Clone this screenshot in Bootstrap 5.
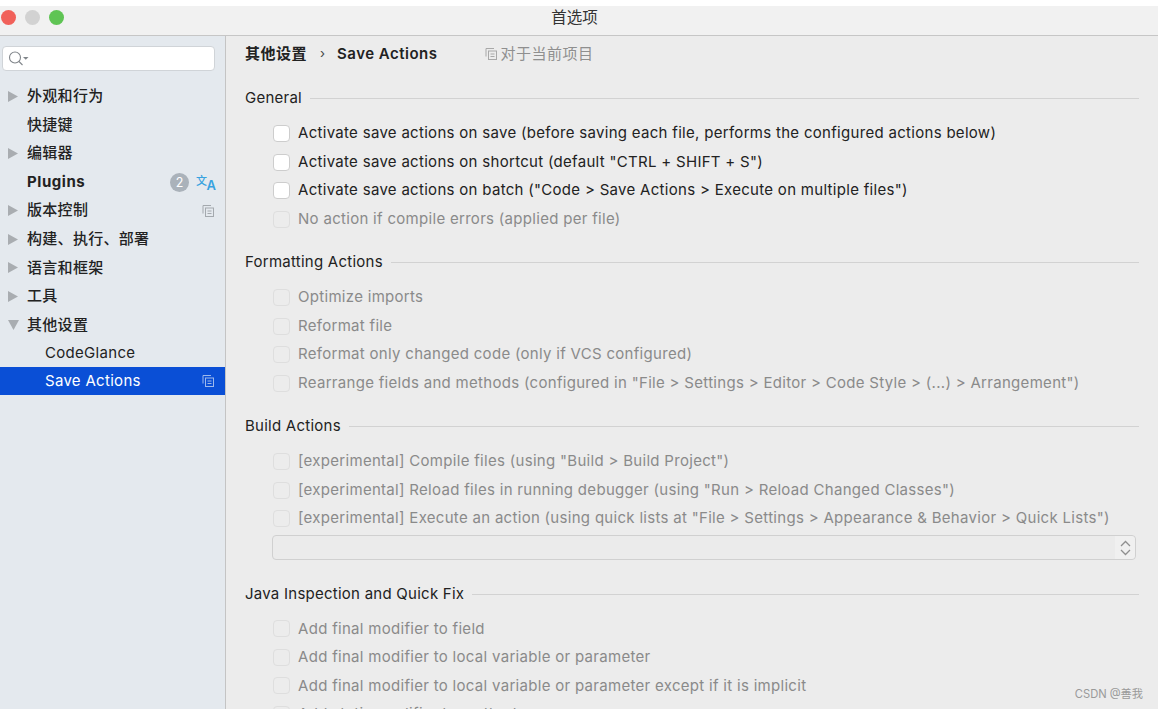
<!DOCTYPE html>
<html lang="zh-CN">
<head>
    <meta charset="UTF-8">
    <meta name="viewport" content="width=device-width, initial-scale=1">
    <title>首选项</title>
    <link rel="stylesheet" href="https://cdn.jsdelivr.net/npm/bootstrap@5.3.0/dist/css/bootstrap.min.css">
    <style>
        html, body { height: 709px; overflow: hidden; }
        body { background: #fff; font-family: Inter, "Noto Sans CJK SC", sans-serif; font-size: 15px; color: #222; padding-top: 6px; }
        .title-bar { height: 30px; background: #f1f1f1; border-bottom: 1px solid #c6c6c6; position: relative; padding-right: 9px; }
        .title-text { font-size: 15.5px; color: #333; line-height: 23px; }
        .light { width: 15px; height: 15px; border-radius: 50%; }
        .light-red { background: #f1615a; }
        .light-gray { background: #d2d2d2; }
        .light-green { background: #5fc454; }
        .lights { position: absolute; left: 1px; top: 4px; gap: 9px; }
        .shell { height: 673px; }
        .side { width: 226px; background: #e4e9ee; border-right: 1px solid #c4c4c4; flex: none; }
        .search-box { height: 25px; margin: 10px 10px 0 2px; background: #fff; border: 1px solid #d0d4d8; border-radius: 4px; padding-left: 5px; }
        .tree { margin-top: 11.25px; background: transparent; }
        .tree .tree-item { height: 28.55px; margin-top: 0; padding: 0 11px 0 8px; background: transparent; border: 0; border-radius: 0; font-size: 15px; color: #222; font-weight: 500; letter-spacing: .3px; }
        .tree .tree-item.sub { padding-left: 45px; font-weight: 400; font-size: 15px; letter-spacing: .3px; }
        .tree .tree-item.active { background: #0a4fd6; color: #fff; }
        .arrow { width: 19px; flex: none; display: flex; }
        .plugin-name { letter-spacing: .55px; }
        .count { width: 19px; height: 19px; border-radius: 50%; background: #aab2ba; color: #fff; font-size: 12.5px; line-height: 19px; text-align: center; margin-right: 7px; font-weight: 400; letter-spacing: 0; }
        .translate-icon { margin-right: -2px; }
        .main-pane { background: #ececec; padding: 0 19px 0 19px; position: relative; }
        .crumb { height: 36px; font-size: 15px; }
        .crumb-strong { font-weight: 600; color: #222; letter-spacing: .5px; }
        .crumb-sep { margin: 0 12px 0 13px; color: #444; font-size: 13px; }
        .scope { color: #8f8f8f; margin-left: 47px; font-size: 15px; letter-spacing: .5px; }
        .sec-head { height: 20px; margin-top: 19.25px; margin-bottom: 10.75px; letter-spacing: .25px; color: #222; }
        .sec-head.sec-first { margin-top: 16.5px; }
        .sec-head.sec-after-pick { margin-top: 24px; margin-bottom: 10.25px; }
        .sec-line { height: 1px; background: #d2d2d2; margin-left: 8px; margin-right: 0; }
        .opt { height: 28.5px; padding-left: 28px; letter-spacing: .3px; white-space: nowrap; color: #222; }
        .opt.off { color: #8a8a8a; }
        .opt .form-check-input { width: 17px; height: 17px; margin: 0 8px 0 0; border: 1px solid #cdcdcd; border-radius: 4px; background-color: #fff; flex: none; opacity: 1; }
        .opt.off .form-check-input { background-color: #ececec; border-color: #dedede; }
        .pick { height: 25px; margin: 2.5px 3px 0 27px; border: 1px solid #d0d0d0; border-radius: 4px; background: #ebebeb; }
        .pick-arrows { width: 20px; height: 100%; background: #f0f0f0; border-radius: 0 4px 4px 0; }
        .mark-csdn { position: absolute; right: 15px; top: 650px; font-size: 11.2px; color: #9a9a9a; }
    </style>
</head>
<body>
    <div class="title-bar d-flex justify-content-center">
        <div class="lights d-flex">
            <div class="light light-red"></div>
            <div class="light light-gray"></div>
            <div class="light light-green"></div>
        </div>
        <div class="title-text">首选项</div>
    </div>
    <div class="shell d-flex">
        <div class="side">
            <div class="search-box d-flex align-items-center">
                <svg width="22" height="18" viewBox="0 0 22 18" fill="none" stroke="#80858a" stroke-width="1.100"><circle cx="7" cy="7.500" r="5.500"/><path d="M11 11.500l3.500 3.500"/><path d="M15 7h5.500l-2.750 2.750z" fill="#80858a" stroke="none"/></svg>
            </div>
            <div class="tree list-group list-group-flush">
                <div class="tree-item list-group-item d-flex align-items-center"><span class="arrow"><svg width="10" height="11" viewBox="0 0 10 11"><path d="M0 0l10 5.500l-10 5.500z" fill="#a9adb1"/></svg></span>外观和行为</div>
                <div class="tree-item list-group-item d-flex align-items-center"><span class="arrow"></span>快捷键</div>
                <div class="tree-item list-group-item d-flex align-items-center"><span class="arrow"><svg width="10" height="11" viewBox="0 0 10 11"><path d="M0 0l10 5.500l-10 5.500z" fill="#a9adb1"/></svg></span>编辑器</div>
                <div class="tree-item list-group-item d-flex align-items-center"><span class="arrow"></span><span class="plugin-name fw-bold flex-grow-1">Plugins</span><span class="count">2</span><svg class="translate-icon" width="20" height="20" viewBox="0 0 20 20" fill="#38a3e0"><text x="0" y="13" font-size="11" font-weight="500" font-family="Noto Sans CJK SC">文</text><text x="10.500" y="18" font-size="13" font-weight="600" font-family="Inter">A</text></svg></div>
                <div class="tree-item list-group-item d-flex align-items-center"><span class="arrow"><svg width="10" height="11" viewBox="0 0 10 11"><path d="M0 0l10 5.500l-10 5.500z" fill="#a9adb1"/></svg></span><span class="flex-grow-1">版本控制</span><svg width="12" height="12" viewBox="0 0 12 12" fill="none" stroke="#a4a9ae"><path d="M1 8.500V.5h8"/><rect x="3.500" y="3" width="8" height="8.500"/><path d="M5.500 6h4M5.500 8.500h4"/></svg></div>
                <div class="tree-item list-group-item d-flex align-items-center"><span class="arrow"><svg width="10" height="11" viewBox="0 0 10 11"><path d="M0 0l10 5.500l-10 5.500z" fill="#a9adb1"/></svg></span>构建、执行、部署</div>
                <div class="tree-item list-group-item d-flex align-items-center"><span class="arrow"><svg width="10" height="11" viewBox="0 0 10 11"><path d="M0 0l10 5.500l-10 5.500z" fill="#a9adb1"/></svg></span>语言和框架</div>
                <div class="tree-item list-group-item d-flex align-items-center"><span class="arrow"><svg width="10" height="11" viewBox="0 0 10 11"><path d="M0 0l10 5.500l-10 5.500z" fill="#a9adb1"/></svg></span>工具</div>
                <div class="tree-item list-group-item d-flex align-items-center"><span class="arrow"><svg width="11" height="10" viewBox="0 0 11 10"><path d="M0 0h11l-5.500 10z" fill="#a9adb1"/></svg></span>其他设置</div>
                <div class="tree-item sub list-group-item d-flex align-items-center">CodeGlance</div>
                <div class="tree-item sub active list-group-item d-flex align-items-center"><span class="flex-grow-1">Save Actions</span><svg width="12" height="12" viewBox="0 0 12 12" fill="none" stroke="#9db9ec"><path d="M1 8.500V.5h8"/><rect x="3.500" y="3" width="8" height="8.500"/><path d="M5.500 6h4M5.500 8.500h4"/></svg></div>
            </div>
        </div>
        <div class="main-pane flex-grow-1">
            <div class="crumb d-flex align-items-center">
                <span class="crumb-strong">其他设置</span>
                <span class="crumb-sep">›</span>
                <span class="crumb-strong">Save Actions</span>
                <span class="scope d-flex align-items-center gap-1"><svg width="12" height="12" viewBox="0 0 12 12" fill="none" stroke="#a8a8a8"><path d="M1 8.500V.5h8"/><rect x="3.500" y="3" width="8" height="8.500"/><path d="M5.500 6h4M5.500 8.500h4"/></svg>对于当前项目</span>
            </div>

            <div class="sec-head sec-first d-flex align-items-center"><span>General</span><div class="sec-line flex-grow-1"></div></div>
            <div class="opt d-flex align-items-center"><input class="form-check-input" type="checkbox">Activate save actions on save (before saving each file, performs the configured actions below)</div>
            <div class="opt d-flex align-items-center"><input class="form-check-input" type="checkbox">Activate save actions on shortcut (default "CTRL + SHIFT + S")</div>
            <div class="opt d-flex align-items-center"><input class="form-check-input" type="checkbox">Activate save actions on batch ("Code &gt; Save Actions &gt; Execute on multiple files")</div>
            <div class="opt off d-flex align-items-center"><input class="form-check-input" type="checkbox" disabled>No action if compile errors (applied per file)</div>

            <div class="sec-head d-flex align-items-center"><span>Formatting Actions</span><div class="sec-line flex-grow-1"></div></div>
            <div class="opt off d-flex align-items-center"><input class="form-check-input" type="checkbox" disabled>Optimize imports</div>
            <div class="opt off d-flex align-items-center"><input class="form-check-input" type="checkbox" disabled>Reformat file</div>
            <div class="opt off d-flex align-items-center"><input class="form-check-input" type="checkbox" disabled>Reformat only changed code (only if VCS configured)</div>
            <div class="opt off d-flex align-items-center"><input class="form-check-input" type="checkbox" disabled>Rearrange fields and methods (configured in "File &gt; Settings &gt; Editor &gt; Code Style &gt; (...) &gt; Arrangement")</div>

            <div class="sec-head d-flex align-items-center"><span>Build Actions</span><div class="sec-line flex-grow-1"></div></div>
            <div class="opt off d-flex align-items-center"><input class="form-check-input" type="checkbox" disabled>[experimental] Compile files (using "Build &gt; Build Project")</div>
            <div class="opt off d-flex align-items-center"><input class="form-check-input" type="checkbox" disabled>[experimental] Reload files in running debugger (using "Run &gt; Reload Changed Classes")</div>
            <div class="opt off d-flex align-items-center"><input class="form-check-input" type="checkbox" disabled>[experimental] Execute an action (using quick lists at "File &gt; Settings &gt; Appearance &amp; Behavior &gt; Quick Lists")</div>
            <div class="pick d-flex justify-content-end">
                <div class="pick-arrows d-flex align-items-center justify-content-center"><svg width="11" height="16" viewBox="0 0 11 16" fill="none" stroke="#8f8f8f" stroke-width="1.300"><path d="M1 6l4.500-4.500L10 6M1 10l4.500 4.500L10 10"/></svg></div>
            </div>

            <div class="sec-head sec-after-pick d-flex align-items-center"><span>Java Inspection and Quick Fix</span><div class="sec-line flex-grow-1"></div></div>
            <div class="opt off d-flex align-items-center"><input class="form-check-input" type="checkbox" disabled>Add final modifier to field</div>
            <div class="opt off d-flex align-items-center"><input class="form-check-input" type="checkbox" disabled>Add final modifier to local variable or parameter</div>
            <div class="opt off d-flex align-items-center"><input class="form-check-input" type="checkbox" disabled>Add final modifier to local variable or parameter except if it is implicit</div>
            <div class="opt off d-flex align-items-center"><input class="form-check-input" type="checkbox" disabled>Add static modifier to method</div>

            <div class="mark-csdn">CSDN @善我</div>
        </div>
    </div>
    <script src="https://cdn.jsdelivr.net/npm/bootstrap@5.3.0/dist/js/bootstrap.bundle.min.js"></script>
</body>
</html>
